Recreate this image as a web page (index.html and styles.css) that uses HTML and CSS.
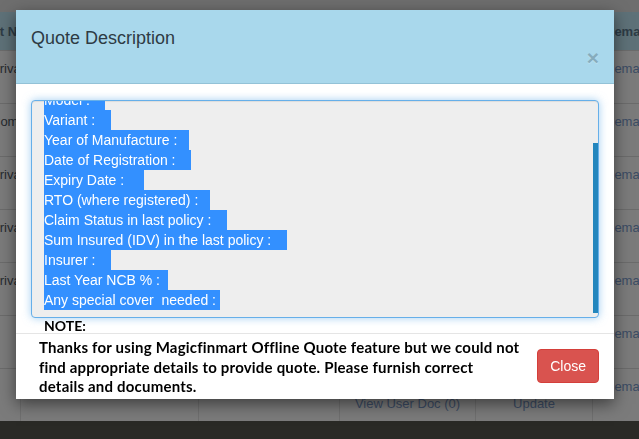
FILE: index.html
```html
<!DOCTYPE html>
<html>
<head>
<meta charset="utf-8">
<link rel="stylesheet" href="styles.css">
</head>
<body>
<div class="page">
  <div class="topbar"></div>
  <div class="grid">
    <div class="row head">
      <div class="cell c1h">Product Name</div>
      <div class="cell">Customer</div>
      <div class="cell">Quote</div>
      <div class="cell">Documents</div>
      <div class="cell">Action</div>
      <div class="cell right">Remarks</div>
    </div>
    <div class="row">
      <div class="cell c1">Private Car</div><div class="cell"></div><div class="cell"></div><div class="cell"></div><div class="cell"></div><div class="cell right link">Remark</div>
    </div>
    <div class="row">
      <div class="cell c1">Commercial</div><div class="cell"></div><div class="cell"></div><div class="cell"></div><div class="cell"></div><div class="cell right link">Remark</div>
    </div>
    <div class="row">
      <div class="cell c1">Private Car</div><div class="cell"></div><div class="cell"></div><div class="cell"></div><div class="cell"></div><div class="cell right link">Remark</div>
    </div>
    <div class="row">
      <div class="cell c1">Private Car</div><div class="cell"></div><div class="cell"></div><div class="cell"></div><div class="cell"></div><div class="cell right link">Remark</div>
    </div>
    <div class="row">
      <div class="cell c1">Private Car</div><div class="cell"></div><div class="cell"></div><div class="cell"></div><div class="cell"></div><div class="cell right link">Remark</div>
    </div>
    <div class="row">
      <div class="cell c1"></div><div class="cell"></div><div class="cell"></div><div class="cell"></div><div class="cell"></div><div class="cell right link">Remark</div>
    </div>
    <div class="row">
      <div class="cell c1"></div><div class="cell"></div><div class="cell"></div><div class="cell low link">View User Doc (0)</div><div class="cell low link">Update</div><div class="cell right link">Remark</div>
    </div>
  </div>
  <div class="footbar"></div>
</div>

<div class="modal">
  <div class="modal-header">
    <h4 class="modal-title">Quote Description</h4>
    <button class="close" type="button">×</button>
  </div>
  <div class="modal-body">
    <div class="ta">
      <div class="ta-text">
        <div class="ta-lines"><span class="sel">Model :    </span><span class="sel">Variant :    </span><span class="sel">Year of Manufacture :   </span><span class="sel">Date of Registration :    </span><span class="sel">Expiry Date :     </span><span class="sel">RTO (where registered) :   </span><span class="sel">Claim Status in last policy :    </span><span class="sel">Sum Insured (IDV) in the last policy :    </span><span class="sel">Insurer :    </span><span class="sel">Last Year NCB % :  </span><span class="sel">Any special cover  needed : </span></div>
      </div>
      <div class="ta-bar"><div class="thumb"></div></div>
    </div>
    <div class="note">NOTE:</div>
  </div>
  <div class="modal-footer">
    <p class="msg">Thanks for using Magicfinmart Offline Quote feature but we could not<br>find appropriate details to provide quote. Please furnish correct<br>details and documents.</p>
    <button class="btn-close" type="button">Close</button>
  </div>
</div>
</body>
</html>
```

FILE: styles.css
```css
html, body {
  margin: 0;
  padding: 0;
}
body {
  width: 639px;
  height: 439px;
  overflow: hidden;
  background: #7b7b7b;
  font-family: "Liberation Sans", Arial, sans-serif;
}
.page {
  display: flex;
  flex-direction: column;
  height: 439px;
}
.topbar {
  height: 12px;
  background: #6e6e6e;
  flex: none;
}
.grid {
  margin-left: -60px;
  flex: none;
}
.row {
  display: grid;
  grid-template-columns: 80px 178px 141px 136px 117px 100px;
  height: 53px;
  box-sizing: border-box;
  border-top: 1px solid #6b6b6b;
  font-size: 13px;
  line-height: 16px;
  color: #262a2e;
}
.row.head {
  height: 38px;
  border-top: 0;
  background: #5e7178;
  font-weight: bold;
  color: #2d3b45;
}
.cell {
  border-left: 1px solid #6f6f6f;
  padding: 10px 8px 0 12px;
  white-space: nowrap;
  overflow: hidden;
}
.head .cell {
  padding-top: 12px;
  border-left-color: #596a70;
}
.cell.c1 {
  border-left: 0;
  padding-left: 51px;
}
.cell.c1h {
  border-left: 0;
  padding-left: 15px;
}
.cell.right {
  padding-left: 12px;
}
.link {
  color: #3c4c64;
}
.cell.low {
  padding: 27px 0 0;
  text-align: center;
}
.footbar {
  flex: 1;
  background: #2a2a26;
}

/* modal */
.modal {
  position: fixed;
  left: 16px;
  top: 10px;
  width: 598px;
  background: #fff;
  box-shadow: 0 5px 15px rgba(0, 0, 0, 0.5);
  font-family: "Liberation Sans", Arial, sans-serif;
}
.modal-header {
  display: flex;
  flex-direction: column;
  background: #a9d8ec;
  border-bottom: 1px solid #93c2d7;
  padding: 15px 15px 15px 15px;
  height: 74px;
  box-sizing: border-box;
}
.modal-title {
  margin: 0;
  font-size: 18px;
  line-height: 26px;
  font-weight: normal;
  color: #2e3b44;
}
.close {
  align-self: flex-end;
  margin-top: -4px;
  padding: 0;
  border: 0;
  background: none;
  font-family: "Liberation Sans", Arial, sans-serif;
  font-size: 21px;
  font-weight: bold;
  line-height: 21px;
  color: #000;
  opacity: 0.2;
  text-shadow: 0 1px 0 #fff;
}
.modal-body {
  padding: 16px 15px 0 15px;
}
.ta {
  display: flex;
  height: 218px;
  box-sizing: border-box;
  border: 1px solid #66afe9;
  border-radius: 4px;
  background: #eeeeee;
  box-shadow: inset 0 1px 1px rgba(0, 0, 0, 0.075), 0 0 8px rgba(102, 175, 233, 0.6);
  overflow: hidden;
}
.ta-text {
  flex: 1;
  overflow: hidden;
  padding: 0 12px;
}
.ta-lines {
  margin-top: -11px;
  font-size: 14px;
  line-height: 20px;
  white-space: pre;
}
.sel {
  display: block;
  width: fit-content;
  background: #3390ff;
  color: #fff;
}
.ta-bar {
  width: 5px;
  padding: 42px 0 4px;
  flex: none;
}
.thumb {
  height: 100%;
  background: #2386bd;
}
.note {
  padding-left: 13px;
  font-family: Lato, "Open Sans", sans-serif;
  font-weight: bold;
  font-size: 14px;
  line-height: 15px;
  color: #000;
}
.modal-footer {
  display: flex;
  align-items: center;
  justify-content: space-between;
  border-top: 1px solid #e5e5e5;
  padding: 4px 15px 2px 23px;
}
.msg {
  margin: 0;
  font-family: Lato, "Open Sans", sans-serif;
  font-weight: bold;
  font-size: 15px;
  letter-spacing: 0.2px;
  line-height: 19.5px;
  color: #000;
  white-space: nowrap;
}
.btn-close {
  margin-bottom: 2px;
  background: #d9534f;
  border: 1px solid #d43f3a;
  border-radius: 4px;
  color: #fff;
  font-family: "Liberation Sans", Arial, sans-serif;
  font-size: 14px;
  line-height: 20px;
  padding: 6px 12px;
}
```
